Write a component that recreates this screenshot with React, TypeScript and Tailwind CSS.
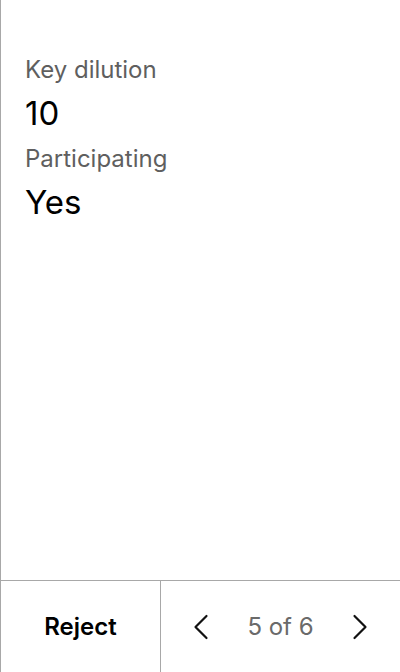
import React from 'react';

const ChevronLeft = () => (
  <svg width="16" height="26" viewBox="0 0 16 26" fill="none" stroke="currentColor" strokeWidth={2.2} strokeLinecap="round" strokeLinejoin="round">
    <path d="M13.5 2L2.5 13l11 11" />
  </svg>
);

const ChevronRight = () => (
  <svg width="16" height="26" viewBox="0 0 16 26" fill="none" stroke="currentColor" strokeWidth={2.2} strokeLinecap="round" strokeLinejoin="round">
    <path d="M2.5 2l11 11-11 11" />
  </svg>
);

const fields = [
  { label: 'Key dilution', value: '10' },
  { label: 'Participating', value: 'Yes' },
];

export default function App() {
  return (
    <div className="h-[672px] w-[400px] flex flex-col bg-white border-l border-[#a8a8a8] font-['Inter',sans-serif]">
      <div className="flex-1 px-6 pt-[54px] flex flex-col gap-[10px]">
        {fields.map((f) => (
          <div key={f.label} className="flex flex-col gap-[7px]">
            <span className="text-[24px] leading-[32px] text-[#5f5f5f]">{f.label}</span>
            <span className="text-[33px] leading-[40px] text-black">{f.value}</span>
          </div>
        ))}
      </div>
      <div className="h-[92px] flex border-t border-[#a8a8a8]">
        <button className="w-[160px] flex items-center justify-center text-[24px] font-semibold text-black border-r border-[#a8a8a8]">
          Reject
        </button>
        <div className="flex-1 flex items-center justify-between px-[32px] text-[#111]">
          <ChevronLeft />
          <span className="text-[24px] text-[#6a6a6a]">5 of 6</span>
          <ChevronRight />
        </div>
      </div>
    </div>
  );
}
